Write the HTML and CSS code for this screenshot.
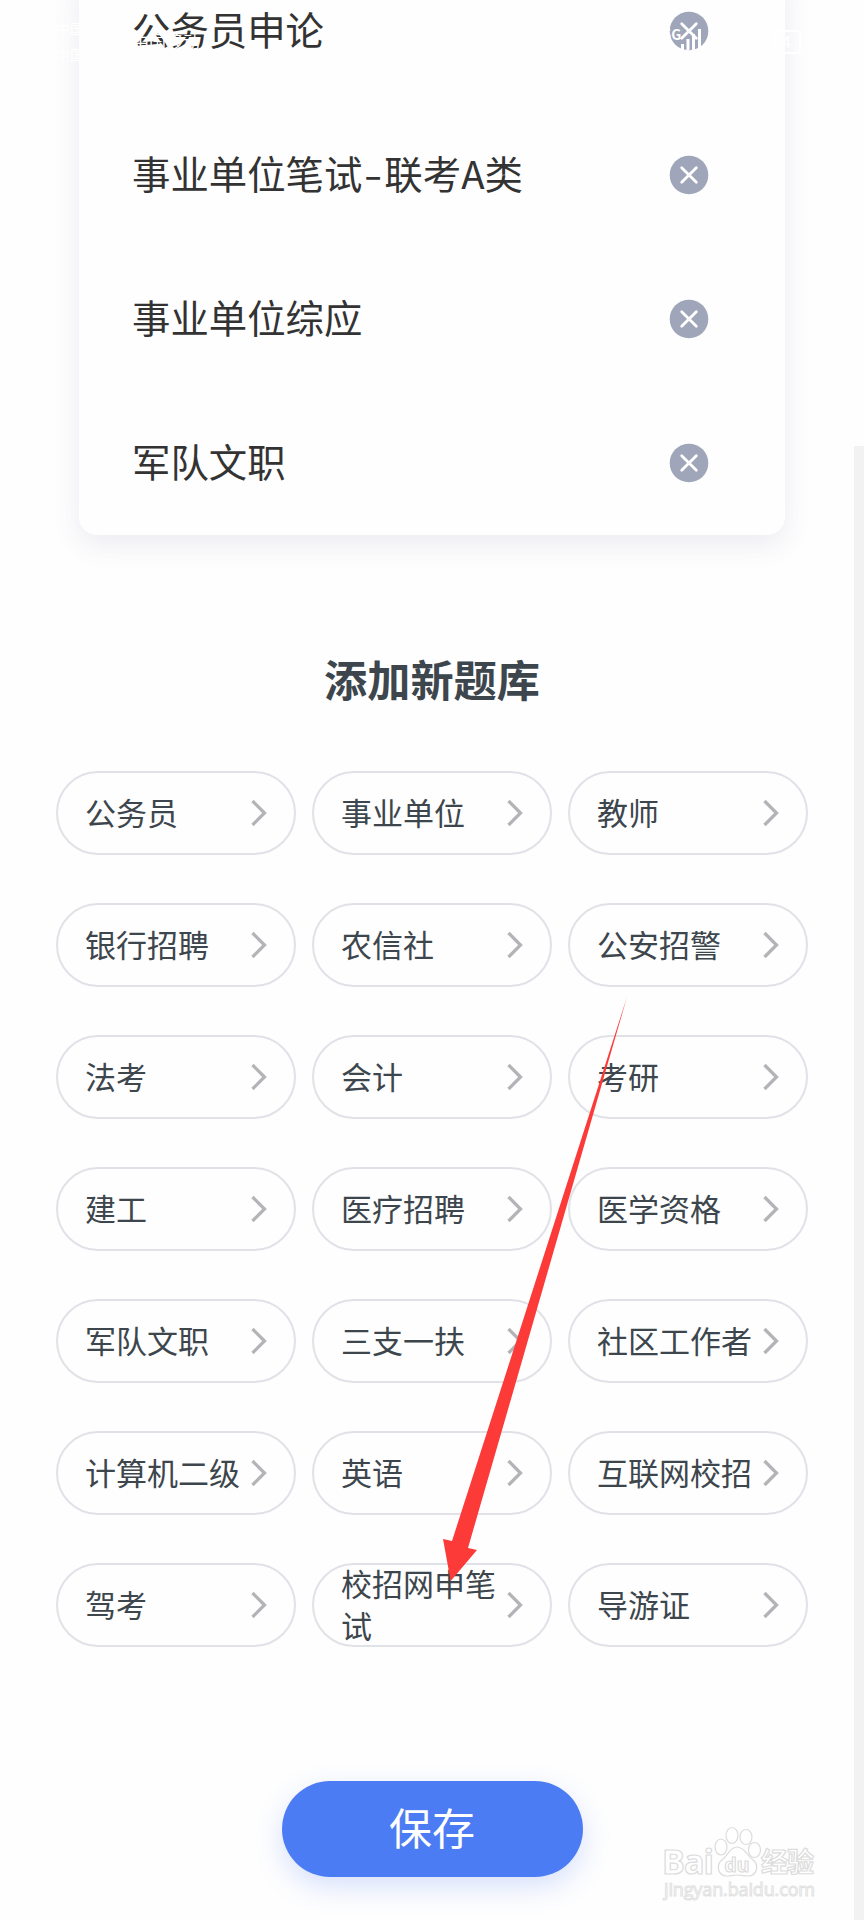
FILE: index.html
```html
<!DOCTYPE html>
<html lang="zh-CN">
<head>
<meta charset="utf-8">
<title>题库</title>
<link rel="stylesheet" href="styles.css">
</head>
<body>
<svg class="defs" width="0" height="0">
  <symbol id="remove" viewBox="0 0 40 40"><circle cx="20" cy="20" r="19.3" fill="#a0a6ba"/><path d="M12.700 12.700 27.300 27.300M27.300 12.700 12.700 27.300" stroke="#fff" stroke-width="2.800" stroke-linecap="round"/></symbol>
  <symbol id="chevron" viewBox="0 0 16 28"><path d="M1.500 2 13.500 14 1.500 26" fill="none" stroke="#b3b4b8" stroke-width="3.300"/></symbol>
</svg>
<main class="page">
  <section class="card">
    <div class="row"><span>公务员申论</span><svg><use href="#remove"/></svg></div>
    <div class="row"><span>事业单位笔试<i class="dash">-</i>联考A类</span><svg><use href="#remove"/></svg></div>
    <div class="row"><span>事业单位综应</span><svg><use href="#remove"/></svg></div>
    <div class="row"><span>军队文职</span><svg><use href="#remove"/></svg></div>
  </section>
  <h1 class="title">添加新题库</h1>
  <section class="grid">
    <div class="pill"><span>公务员</span><svg><use href="#chevron"/></svg></div>
    <div class="pill"><span>事业单位</span><svg><use href="#chevron"/></svg></div>
    <div class="pill"><span>教师</span><svg><use href="#chevron"/></svg></div>
    <div class="pill"><span>银行招聘</span><svg><use href="#chevron"/></svg></div>
    <div class="pill"><span>农信社</span><svg><use href="#chevron"/></svg></div>
    <div class="pill"><span>公安招警</span><svg><use href="#chevron"/></svg></div>
    <div class="pill"><span>法考</span><svg><use href="#chevron"/></svg></div>
    <div class="pill"><span>会计</span><svg><use href="#chevron"/></svg></div>
    <div class="pill"><span>考研</span><svg><use href="#chevron"/></svg></div>
    <div class="pill"><span>建工</span><svg><use href="#chevron"/></svg></div>
    <div class="pill"><span>医疗招聘</span><svg><use href="#chevron"/></svg></div>
    <div class="pill"><span>医学资格</span><svg><use href="#chevron"/></svg></div>
    <div class="pill"><span>军队文职</span><svg><use href="#chevron"/></svg></div>
    <div class="pill"><span>三支一扶</span><svg><use href="#chevron"/></svg></div>
    <div class="pill"><span>社区工作者</span><svg><use href="#chevron"/></svg></div>
    <div class="pill"><span>计算机二级</span><svg><use href="#chevron"/></svg></div>
    <div class="pill"><span>英语</span><svg><use href="#chevron"/></svg></div>
    <div class="pill"><span>互联网校招</span><svg><use href="#chevron"/></svg></div>
    <div class="pill"><span>驾考</span><svg><use href="#chevron"/></svg></div>
    <div class="pill"><span>校招网申笔试</span><svg><use href="#chevron"/></svg></div>
    <div class="pill"><span>导游证</span><svg><use href="#chevron"/></svg></div>
  </section>
  <button class="save">保存</button>
  <div class="scrollbar"></div>
  <svg class="overlay" viewBox="0 0 864 1920">
    <g class="status">
      <text x="56" y="34" font-size="14">中国</text>
      <text x="56" y="60" font-size="14">中国</text>
      <text x="132" y="48" font-size="17">中国移动</text>
      <text x="663" y="40" font-size="14" font-weight="700">5G</text>
      <path d="M682.500 44v6M688 39v11M693.500 34v16M699.500 29v21" stroke="#fff" stroke-width="3"/>
      <rect x="775" y="31" width="25" height="22" rx="3" fill="none" stroke="#fff" stroke-width="2"/>
      <text x="782" y="48" font-size="16">4</text>
    </g>
    <path d="M627 997 452 1541 443 1539 450.700 1581 477 1550 468 1548Z" fill="#fc3a38"/>
    <g class="mark">
      <text x="662" y="1874" font-size="34" font-weight="700" textLength="52">Bai</text>
      <ellipse cx="721" cy="1847" rx="6" ry="8"/><ellipse cx="732" cy="1835.500" rx="6" ry="8"/>
      <ellipse cx="746" cy="1837" rx="6" ry="7.500"/><ellipse cx="754.500" cy="1850" rx="6" ry="7.500"/>
      <path d="M737 1847c-7 0-9 8-14 12-8 6-5 17 4 17 5 0 7-1 10-1s6 1 11 1c9 0 12-11 4-17-5-4-8-12-15-12Z"/>
      <text x="724.500" y="1872" font-size="19" font-weight="700" textLength="25" lengthAdjust="spacingAndGlyphs">du</text>
      <text x="761" y="1872" font-size="27" font-weight="700" textLength="53">经验</text>
      <text class="url" x="664" y="1896" font-size="18" textLength="151">jingyan.baidu.com</text>
    </g>
  </svg>
</main>
</body>
</html>
```
FILE: styles.css
```css
* { box-sizing: border-box; }
body { margin: 0; background: #fefefe; font-family: "Noto Sans CJK SC", sans-serif; }
.defs { position: absolute; }
.page { position: relative; width: 864px; height: 1920px; overflow: hidden; display: flex; flex-direction: column; align-items: center; }
.card { width: 706px; height: 576px; margin-top: -41.500px; padding: 0 76px 0 53px; border-radius: 18px; background: #fefefe; box-shadow: 0 10px 28px rgba(90, 95, 150, .11); flex: none; }
.row { height: 144px; display: flex; align-items: center; justify-content: space-between; font-size: 38.400px; line-height: 56px; color: #333; }
.row span { padding-bottom: 5px; }
.row svg { width: 40px; height: 40px; }
.dash { display: inline-block; width: 22px; font-style: normal; text-align: center; transform: scaleX(1.4); }
.title { margin: 111px 0 0; height: 64px; font-size: 43.200px; line-height: 64px; font-weight: 700; color: #3d464d; }
.grid { display: grid; grid-template-columns: repeat(3, 240px); grid-auto-rows: 84px; gap: 48px 16px; margin-top: 61px; }
.pill { display: flex; align-items: center; justify-content: space-between; padding: 0 26px 0 27px; border: 2px solid #e1e1e8; border-radius: 42px; font-size: 31px; line-height: 42px; color: #3d464d; }
.pill span { width: 157px; padding-bottom: 1px; flex: none; }
.pill svg { width: 16px; height: 28px; flex: none; margin-right: 1px; }
.save { width: 301px; height: 96px; margin-top: 134px; padding: 0 0 6px; border: 0; border-radius: 48px; background: #4c7cf3; color: #fff; font: 43px/90px "Noto Sans CJK SC", sans-serif; box-shadow: 0 10px 28px rgba(76, 124, 243, .22); }
.scrollbar { position: absolute; right: 0; top: 446px; width: 10px; height: 1474px; background: #f2f2f2; }
.overlay { position: absolute; inset: 0; width: 864px; height: 1920px; pointer-events: none; }
.status { fill: #fff; }
.mark { fill: #fff; stroke: #dcdcdc; stroke-width: 1.200; font-family: "Open Sans", "Noto Sans CJK SC", sans-serif; }
.url { stroke: #e2e2e2; stroke-width: 1; }
```
